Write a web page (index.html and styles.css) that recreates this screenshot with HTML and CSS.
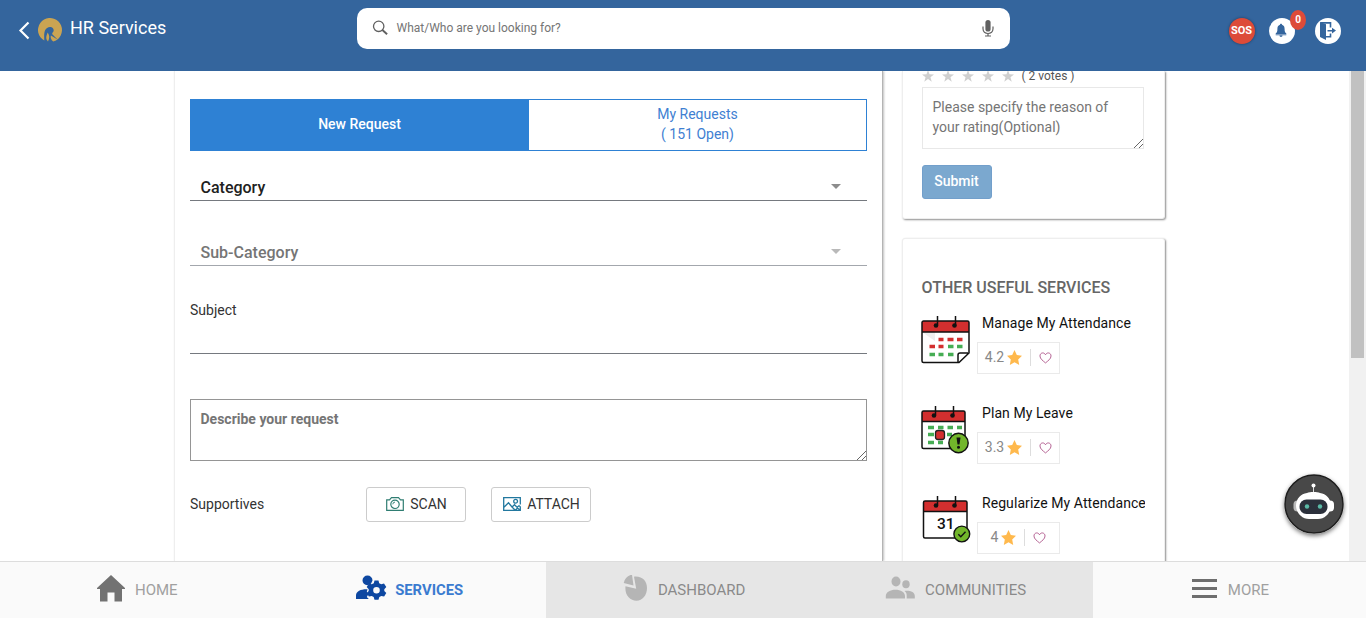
FILE: index.html
```html
<!DOCTYPE html>
<html lang="en">
<head>
<meta charset="utf-8">
<title>HR Services</title>
<link rel="stylesheet" href="styles.css">
</head>
<body>
<svg class="defs" width="0" height="0">
  <symbol id="star" viewBox="0 0 24 24"><path d="M12 0l3 8.500 9 .3-7.100 5.600 2.600 9L12 18.200 4.500 23.400l2.600-9L0 8.800l9-.3z"/></symbol>
  <symbol id="star-full" viewBox="0 0 24 24"><path d="M12 0l3.700 8 8.300 1-6.100 6 1.600 9L12 19.500 4.500 24l1.600-9L0 9l8.300-1z"/></symbol>
  <symbol id="heart" viewBox="0 0 14 13"><path d="M7 11.800C4.500 9.700 1 7.500 1 4.300 1 2.500 2.300 1 4 1c1.300 0 2.400.8 3 2 .6-1.200 1.700-2 3-2 1.700 0 3 1.500 3 3.300 0 3.200-3.500 5.400-6 7.500z" fill="none" stroke="#b0588c" stroke-width="1"/></symbol>
</svg>

<header class="topbar">
  <div class="brand">
    <svg class="back" width="12" height="19" viewBox="0 0 12 19"><path d="M10.500 1.500L2.500 9.500l8 8" fill="none" stroke="#fff" stroke-width="2.200"/></svg>
    <svg class="logo" width="24" height="24" viewBox="0 0 24 24"><path d="M6.300 22.600A12 12 0 1 1 19.500 21.400L14.300 16.300c-.4-.8.200-1.500.8-2.200 1.100-1.600.6-3.600-1.100-4.600C11.500 8.300 8.300 9.500 7 12.500c-1 2.600-.9 5.500-.7 10.100z" fill="#cba452"/><path d="M9.700 14.500c2 3 2 5.300.3 9-2.300-2.600-2.300-4.500-.3-9z" fill="#cba452"/><path d="M12.900 17.500l6.600 3.900a12 12 0 0 1-4.300 2.200C13 21.700 12.200 19.500 12.900 17.500z" fill="#cba452"/></svg>
    <h1 class="title">HR Services</h1>
  </div>
  <div class="search">
    <svg width="16" height="16" viewBox="0 0 16 16" fill="none" stroke="#606060"><circle cx="6.700" cy="6.300" r="5.200" stroke-width="1.300"/><path d="M10.400 10l4.700 4.300" stroke-width="1.900"/></svg>
    <span class="search-text">What/Who are you looking for?</span>
    <svg width="12" height="17" viewBox="0 0 12 17"><rect x="3.400" y="0" width="5.200" height="11.500" rx="2.600" fill="#606060"/><path d="M1 6.500v2.300c0 2.800 2.200 4.700 5 4.700s5-1.900 5-4.700V6.500M6 13.500V16M3 16h6" fill="none" stroke="#606060" stroke-width="1.200"/></svg>
  </div>
  <div class="actions">
    <span class="round sos">SOS</span>
    <span class="round bell">
      <svg width="12" height="15" viewBox="0 0 14 16" fill="#34659d"><path d="M7 0c.8 0 1.200.5 1.200 1.300C10.500 2 11.200 4 11.200 6.200c0 3 .5 4 2 5.200v1H.8v-1c1.500-1.200 2-2.200 2-5.200C2.800 4 3.500 2 5.800 1.300 5.800.5 6.200 0 7 0z"/><path d="M.8 12.800h12.400v.6H.8zM5.200 13.800h3.600C8.600 15 8 15.500 7 15.500s-1.600-.5-1.800-1.700z"/></svg>
      <span class="count">0</span>
    </span>
    <span class="round exit">
      <svg width="16" height="18" viewBox="0 0 16 18" fill="#34659d"><path d="M0 0l6 2.300V18l-6-3z"/><path d="M.5 .9H10.500v4.600M10.500 11.500v3.300H6" fill="none" stroke="#34659d" stroke-width="1.600"/><path d="M7.500 7.900h4.500V5.800L16 8.600l-4 2.900V9.400H7.500z"/></svg>
    </span>
  </div>
</header>

<main class="content">
  <section class="panel">
    <div class="tabs">
      <div class="tab tab-active">New Request</div>
      <div class="tab">My Requests<br>( 151 Open)</div>
    </div>
    <div class="select"><span>Category</span><i class="caret"></i></div>
    <div class="select select-off"><span>Sub-Category</span><i class="caret"></i></div>
    <div class="subject">Subject</div>
    <div class="describe">Describe your request
      <svg class="grip" width="9" height="9" viewBox="0 0 9 9"><path d="M0 9L9 0M5 9l4-4" stroke="#555" stroke-width=".9"/></svg>
    </div>
    <div class="support">
      <span class="support-label">Supportives</span>
      <div class="file-btn">
        <svg width="18" height="14" viewBox="0 0 18 14" fill="none" stroke="#2f7d72" stroke-width="1.200"><path d="M.7 2.800H3.500L5.500.7h7l2 2.100h2.800v10.500H.7z"/><circle cx="9" cy="7.300" r="4.200"/><path d="M6.800 7.300A2.200 2.200 0 0 1 9 5.100" stroke-width=".9"/></svg>
        <span>SCAN</span>
      </div>
      <div class="file-btn">
        <svg width="18" height="14" viewBox="0 0 18 14" fill="none" stroke="#22789f" stroke-width="1.300"><path d="M17.300 7.500V.7H.7v12.600h16.600V9.800M.7 10.500L5.500 5.800 9 10l3 3M9 10l2.500-2.300L14 10.200l2-1.500 1.500 1M12.500 13l2-2 2.500 2"/><circle cx="12.600" cy="4.200" r="1.900"/></svg>
        <span>ATTACH</span>
      </div>
    </div>
  </section>

  <aside class="side">
    <div class="card rating">
      <div class="votes">
        <svg><use href="#star"/></svg><svg><use href="#star"/></svg><svg><use href="#star"/></svg><svg><use href="#star"/></svg><svg><use href="#star"/></svg>
        <span>( 2 votes )</span>
      </div>
      <div class="reason">Please specify the reason of your rating(Optional)
        <svg class="grip" width="9" height="9" viewBox="0 0 9 9"><path d="M0 9L9 0M5 9l4-4" stroke="#555" stroke-width=".9"/></svg>
      </div>
      <div class="submit">Submit</div>
    </div>
    <div class="card services">
      <h2>OTHER USEFUL SERVICES</h2>
      <div class="service">
        <svg class="cal" width="50" height="50" viewBox="0 0 50 50">
          <path d="M2.500 6h44a1.500 1.500 0 0 1 1.500 1.500V38L38 47.500H2.500A1.500 1.500 0 0 1 1 46V7.500A1.500 1.500 0 0 1 2.500 6z" fill="#fff"/>
          <path d="M1 17h13v9z" fill="#eee"/><path d="M1 6h47v11H1z" fill="#d32f2f"/>
          <path d="M2.500 6h44a1.500 1.500 0 0 1 1.500 1.500V38L38 47.500H2.500A1.500 1.500 0 0 1 1 46V7.500A1.500 1.500 0 0 1 2.500 6zM1 17h47M37 47V40q0-2 2-2h8" fill="none" stroke="#111" stroke-width="1.500"/>
          <path d="M16.500 1v9M34.500 1v9" stroke="#111" stroke-width="1.500"/><circle cx="15" cy="10.500" r="2.300" fill="#111"/><circle cx="33.500" cy="10.500" r="2.300" fill="#111"/>
          <path d="M17.500 24.500h5m4 0h6m3.500 0h5.500M8.500 31.500h5.500m3.500 0h5" stroke="#d32f2f" stroke-width="3.300"/><path d="M27 31.500h5.500m3.500 0h5.500M8.500 39.500h5.500m3.500 0h5m4.500 0h5.500" stroke="#46ad54" stroke-width="3.300"/>
        </svg>
        <div class="info"><h3>Manage My Attendance</h3><div class="score"><span>4.2</span><svg class="gold"><use href="#star-full"/></svg><i></i><svg class="heart"><use href="#heart"/></svg></div></div>
      </div>
      <div class="service">
        <svg class="cal" width="50" height="50" viewBox="0 0 50 50">
          <rect x="1" y="6" width="43" height="37.500" rx="1.500" fill="#fff"/><path d="M1 6h43v10.500H1z" fill="#d32f2f"/>
          <rect x="1" y="6" width="43" height="37.500" rx="1.500" fill="none" stroke="#111" stroke-width="1.500"/><path d="M1 16.500h43M14.500 1v9M32.500 1v9" stroke="#111" stroke-width="1.500"/>
          <circle cx="13" cy="10.500" r="2.300" fill="#111"/><circle cx="31.500" cy="10.500" r="2.300" fill="#111"/>
          <path d="M7 22.500h6m4 0h5.500m4 0h5.500m4 0h5M7 29.500h6m13 0h5M7 37.500h6m4 0h5" stroke="#46ad54" stroke-width="3.300"/>
          <rect x="14.500" y="25.500" width="9" height="9" rx="2.500" fill="#d32f2f" stroke="#222" stroke-width="1.300"/>
          <circle cx="37.500" cy="38" r="9.700" fill="#72b62b" stroke="#111" stroke-width="1.400"/><path d="M35.500 32.500h4l-1 7h-2z" fill="#111"/><circle cx="37.500" cy="42.300" r="1.500" fill="#111"/>
        </svg>
        <div class="info"><h3>Plan My Leave</h3><div class="score"><span>3.3</span><svg class="gold"><use href="#star-full"/></svg><i></i><svg class="heart"><use href="#heart"/></svg></div></div>
      </div>
      <div class="service">
        <svg class="cal" width="50" height="50" viewBox="0 0 50 50">
          <rect x="2.500" y="6" width="43.500" height="37" rx="1.500" fill="#fff"/><path d="M2.500 6H46v10.500H2.500z" fill="#d32f2f"/>
          <rect x="2.500" y="6" width="43.500" height="37" rx="1.500" fill="none" stroke="#111" stroke-width="1.500"/><path d="M2.500 16.500H46M16.500 1v9M34.500 1v9" stroke="#111" stroke-width="1.500"/>
          <circle cx="15" cy="10.500" r="2.300" fill="#111"/><circle cx="33.500" cy="10.500" r="2.300" fill="#111"/>
          <text class="day" x="16" y="34.400">31</text>
          <circle cx="40.800" cy="39" r="7.900" fill="#72b62b" stroke="#111" stroke-width="1.400"/><path d="M37.300 39.300l2.500 2.500 4.700-5" fill="none" stroke="#111" stroke-width="1.400"/>
        </svg>
        <div class="info"><h3>Regularize My Attendance</h3><div class="score"><span>4</span><svg class="gold"><use href="#star-full"/></svg><i></i><svg class="heart"><use href="#heart"/></svg></div></div>
      </div>
    </div>
  </aside>
  <div class="scroll"><div class="thumb"></div></div>
</main>

<nav class="nav">
  <div class="item home"><svg width="28" height="27" viewBox="0 0 28 27"><path d="M14 0l14 13v1h-3v12.500h-7.500v-9h-7v9H3V14H0v-1z" fill="#727272"/></svg><span>HOME</span></div>
  <div class="item active">
    <svg width="31" height="26" viewBox="0 0 31 26"><path d="M6.500 5.500a5 5 0 1 1 10 0L15 8.700l-3.500 1.500C8.500 10 6.500 8 6.500 5.500zM0 24v-3.500C0 16 5.500 14 11.500 14.300L10.800 17l1.700 2L10.800 22l2 2z" fill="#0d47a1"/>
    <path d="M18.500 5.500h4l.7 2.800 2 1 2.800-.8 2.300 3.400-2 2.300v1.800l2 2.100-2.200 3.500-2.800-.7-2 1-.8 2.900h-4l-.8-2.900-2-1-2.800.7-2.200-3.500 2-2.100v-1.800l-2-2.300L13 8.500l2.800.8 2-1zM20.500 12a3.300 3.300 0 1 0 0 6.600 3.300 3.300 0 0 0 0-6.600z" fill="#0d47a1" fill-rule="evenodd"/></svg><span>SERVICES</span></div>
  <div class="item off dash"><svg width="26" height="27" viewBox="0 0 26 27"><path d="M11.500 2.500c8.500-.8 13 4.500 13 11.300C24.500 21 20 26.500 14 26.500c-6.600 0-12-5.500-11-14.500l10.700 2.500zM9.500 .5L11 11.300 1.200 8.700C2.200 4.500 5 1 9.500 .5z" fill="#b5b5b5" transform="translate(.5 -.8)"/></svg><span>DASHBOARD</span></div>
  <div class="item off comm"><svg width="31" height="24" viewBox="0 0 31 24" fill="#b5b5b5"><ellipse cx="11" cy="5.500" rx="4.500" ry="5"/><ellipse cx="21" cy="8.300" rx="3.700" ry="4"/><path d="M.8 22.500v-2.500c0-4 4.500-6.300 9.700-6.300S20 16 20 20v2.500zM21.700 22.500v-3.200c0-2.300-1-3.600-2.200-4.400 6-.5 10.300 1.300 10.300 5.100v2.500z"/></svg><span>COMMUNITIES</span></div>
  <div class="item more"><svg width="25" height="19" viewBox="0 0 25 19"><path d="M0 1.500h25M0 9.500h25M0 17.500h25" stroke="#6e6e6e" stroke-width="2.800"/></svg><span>MORE</span></div>
</nav>

<div class="bot">
  <svg width="60" height="60" viewBox="0 0 60 60"><circle cx="30" cy="30" r="29" fill="#484848" stroke="#1d1d1d" stroke-width="1.500"/><path d="M29.500 12v8" stroke="#ddd" stroke-width="1"/><circle cx="29.500" cy="11.500" r="2" fill="#fff"/><rect x="9.500" y="26.500" width="10" height="11" rx="4" fill="#bbb"/><rect x="40" y="26.500" width="10" height="11" rx="4" fill="#fff"/><path d="M23 19c3-1.300 10-1.300 13 0 6 .7 11 6 11 12.500C47 39 41 45 34 45h-9c-7 0-13-6-13-13.500C12 25 17 19.700 23 19z" fill="#fff"/><rect x="15.500" y="25.500" width="28" height="14.500" rx="7" fill="#2b303b"/><circle cx="23" cy="32.500" r="2.200" fill="#5ab9a6"/><circle cx="36" cy="32.500" r="2.200" fill="#5ab9a6"/></svg>
</div>
</body>
</html>
```

FILE: styles.css
```css
* { box-sizing: border-box; }
body { margin: 0; height: 618px; overflow: hidden; display: flex; flex-direction: column; font: 14px/20px Roboto, sans-serif; color: #333; background: #fff; }
svg { display: block; flex: none; }
.defs { position: absolute; }
h1, h2, h3 { margin: 0; }

.topbar { flex: none; height: 71px; background: #34659d; display: flex; align-items: flex-start; padding: 8px 25px 0 18px; }
.brand { display: flex; width: 339px; padding-top: 10px; }
.back { margin-top: 3px; }
.logo { margin: 0 8px; }
.title { font-size: 18px; line-height: 20px; font-weight: 400; color: #fff; }
.search { width: 653px; height: 41px; border-radius: 10px; background: #fff; display: flex; align-items: center; padding: 0 16px 1px 15px; }
.search-text { flex: 1; margin-left: 8.500px; font-size: 12px; color: #757575; }
.actions { margin-left: auto; display: flex; padding-top: 10px; }
.round { width: 26px; height: 26px; border-radius: 50%; background: #fff; display: flex; align-items: center; justify-content: center; position: relative; }
.sos { background: #dd4b39; color: #fff; font-size: 11px; font-weight: 700; box-shadow: 0 0 3px rgba(0,0,0,.4); padding-right: 1px; }
.bell { margin: 0 20px 0 14px; padding: 0 2px 1px 0; }
.count { position: absolute; left: 21px; top: -8px; width: 16px; height: 20px; border-radius: 50%; background: #dd4b39; color: #fff; font-size: 10px; font-weight: 700; text-align: center; }

.content { flex: none; height: 490px; overflow: hidden; display: flex; padding-left: 174px; }
.panel { width: 709px; padding: 28px 15px 0 15px; border-left: 1px solid #eee; border-right: 1px solid #b4b4b4; box-shadow: 1px 0 2px rgba(0,0,0,.25); }
.tabs { display: flex; height: 52px; border: 1px solid #2e81d4; }
.tab { flex: 1; display: flex; align-items: center; justify-content: center; text-align: center; padding-bottom: 2px; color: #3f7fd2; }
.tab-active { background: #2e81d4; color: #fff; font-weight: 500; padding-right: 1px; }
.select { height: 30px; margin-top: 20px; padding: 7px 26px 0 10.500px; border-bottom: 1px solid #75797f; display: flex; justify-content: space-between; font-size: 16px; line-height: 19px; font-weight: 500; color: #212121; }
.caret { width: 0; height: 0; margin-top: 6px; border: 5px solid transparent; border-top-color: #8d8d8d; border-bottom: 0; }
.select-off { margin-top: 35px; color: #757575; border-color: #a3a7ad; }
.select-off .caret { border-top-color: #b9b9b9; }
.subject { margin-top: 34px; height: 54px; border-bottom: 1px solid #75797f; }
.describe { position: relative; margin-top: 45px; height: 62px; border: 1px solid #959595; padding: 9px 9.500px; font-weight: 700; color: #757575; }
.grip { position: absolute; right: 0; bottom: 0; }
.support { margin-top: 26px; display: flex; align-items: center; }
.support-label { width: 176px; padding-bottom: 1px; }
.file-btn { width: 100px; height: 35px; margin-right: 25px; border: 1px solid #ccc; border-radius: 3px; display: flex; align-items: center; justify-content: center; gap: 6px; padding: 0 0 1px 1px; }

.side { width: 263px; margin-left: 18.500px; }
.card { background: #fff; border: 1px solid #eee; border-radius: 3px; padding: 0 19px; box-shadow: 1px 1px 2px rgba(0,0,0,.45); }
.rating { height: 148px; border-top: 0; border-radius: 0 0 3px 3px; }
.votes { display: flex; height: 16px; align-items: flex-start; font-size: 12px; line-height: 11px; color: #555; }
.votes svg { width: 12px; height: 12px; margin-right: 8px; margin-top: -1px; fill: #d0d0d0; }
.reason { position: relative; width: 222px; height: 62px; border: 1px solid #e8e8e8; padding: 9px 10px; color: #757575; }
.submit { width: 70px; height: 34px; margin-top: 16px; border: 1px solid #729fcb; border-radius: 3px; background: #7ba8cf; color: #fff; font-weight: 500; line-height: 31px; text-align: center; }
.services { margin-top: 19px; height: 400px; padding-top: 39px; }
.services h2 { font-size: 16px; line-height: 20px; font-weight: 500; color: #666; white-space: nowrap; }
.service { display: flex; height: 90px; }
.services h2 + .service { margin-top: 15px; }
.cal { margin: 2px 5.500px 0 -.5px; }
.info { flex: 1; min-width: 0; }
.info h3 { margin-left: 5.500px; font-size: 14px; font-weight: 400; letter-spacing: .07px; color: #111; white-space: nowrap; overflow: hidden; }
.score { display: flex; align-items: center; justify-content: center; width: 83px; height: 32px; margin: 9px 0 0; padding: 0 0 2px 1px; border: 1px solid #eaeaea; color: #888; }
.gold { width: 15px; height: 15px; margin-left: 3px; fill: #ffb94d; }
.score i { width: 1px; height: 17px; margin: 0 8px; background: #ddd; }
.heart { width: 13px; height: 12px; margin-top: 1px; }
.day { font: 500 15.500px Roboto, sans-serif; fill: #111; }
.scroll { width: 17px; margin-left: auto; padding: 0 2px; background: #f1f1f1; }
.thumb { height: 287px; background: #c1c1c1; }

.nav { flex: none; height: 57px; border-top: 1px solid #ddd; background: #fafafa; display: grid; grid-template-columns: repeat(5, 1fr); }
.item { display: flex; align-items: center; padding-bottom: 4px; font-size: 15px; color: #a0a0a0; gap: 10px; }
.item span { padding-top: 3px; }
.home { padding-left: 97px; }
.active { padding-left: 83px; gap: 8px; font-weight: 700; font-size: 14.800px; color: #3a7bd0; }
.off { background: #e6e6e6; color: #8a8a8a; }
.dash { padding-left: 75.500px; }
.comm { padding-left: 65.500px; gap: 9px; }
.more { padding-left: 99px; gap: 11px; }
.bot { position: absolute; left: 1284px; top: 474px; width: 60px; height: 60px; border-radius: 50%; box-shadow: 0 2px 4px rgba(0,0,0,.5); }
```
